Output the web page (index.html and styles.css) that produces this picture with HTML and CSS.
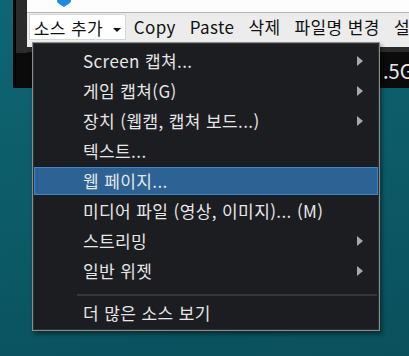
FILE: index.html
```html
<!DOCTYPE html>
<html lang="ko">
<head>
    <meta charset="UTF-8">
    <title>소스 추가</title>
    <link rel="stylesheet" href="styles.css">
</head>
<body>

    <!-- App window behind the menu -->
    <div class="window">
        <div class="win-top">
            <div class="side"></div>
            <div class="main">
                <div class="titlebar">
                    <svg class="logo" width="14" height="7" viewBox="0 0 14 7">
                        <path d="M0 0 H14 V1 C14 3 10 5 7 7 C4 5 0 3 0 1 Z" fill="#1e88e5"/>
                    </svg>
                </div>
                <div class="toolbar">
                    <div class="tool tool-add">소스 추가 <span class="caret"></span></div>
                    <div class="tool">Copy</div>
                    <div class="tool">Paste</div>
                    <div class="tool">삭제</div>
                    <div class="tool">파일명 변경</div>
                    <div class="tool">설정</div>
                </div>
                <div class="panel-head"></div>
            </div>
        </div>
        <div class="panel">
            <span class="size">.5GB</span>
        </div>
    </div>

    <!-- Dropdown menu -->
    <ul class="menu">
        <li class="item has-sub">Screen 캡쳐...</li>
        <li class="item has-sub">게임 캡쳐(G)</li>
        <li class="item has-sub">장치 (웹캠, 캡쳐 보드...)</li>
        <li class="item">텍스트...</li>
        <li class="item active">웹 페이지...</li>
        <li class="item">미디어 파일 (영상, 이미지)... (M)</li>
        <li class="item has-sub">스트리밍</li>
        <li class="item has-sub">일반 위젯</li>
        <li class="sep"></li>
        <li class="item">더 많은 소스 보기</li>
    </ul>

</body>
</html>
```

FILE: styles.css
```css
/* Global */
* {
    margin: 0;
    padding: 0;
    box-sizing: border-box;
}

body {
    width: 409px;
    height: 356px;
    overflow: hidden;
    position: relative;
    background: linear-gradient(170deg, #0f6673, #0c5966 60%, #0a4f5c);
    font-family: "Noto Sans CJK KR", "Noto Sans", sans-serif;
    font-size: 17px;
    letter-spacing: 0.4px;
}

/* Window behind */
.window {
    position: absolute;
    left: 13px;
    top: 0;
    width: 420px;
    height: 88px;
    background: #0b0b0b;
    border-left: 3px solid #050505;
}

.win-top {
    display: flex;
}

.side {
    width: 15px;
    height: 53px;
    background: #2b2b2b;
}

.main {
    flex: 1;
}

.titlebar {
    height: 13px;
    background: #fdfdfd;
    position: relative;
    border-bottom: 1px solid #b4b4b4;
}

.logo {
    position: absolute;
    left: 30px;
    top: 0;
}

.toolbar {
    height: 34px;
    background: #ececec;
    display: flex;
    align-items: flex-start;
    padding-left: 2px;
}

.tool {
    height: 26px;
    line-height: 26px;
    margin-top: 1px;
    padding: 0 7px;
    color: #111;
    white-space: nowrap;
}

.tool-add {
    background: #fff;
    border: 1px solid #d6d6d6;
    padding: 0 5px 0 4px;
    margin-right: 1px;
    width: 97px;
}

.caret {
    display: inline-block;
    width: 0;
    height: 0;
    margin-left: 5px;
    vertical-align: middle;
    border-left: 4px solid transparent;
    border-right: 4px solid transparent;
    border-top: 4px solid #111;
}

.panel-head {
    height: 5px;
    background: #2b2b2b;
}

.panel {
    height: 35px;
    position: relative;
}

.size {
    position: absolute;
    left: 367px;
    top: 3px;
    color: #e8e8e8;
    font-size: 20px;
    letter-spacing: 0;
}

/* Dropdown menu */
.menu {
    position: absolute;
    left: 32px;
    top: 42px;
    width: 348px;
    list-style: none;
    display: flex;
    flex-direction: column;
    background: #1c1d21;
    border: 1px solid #8c8c8c;
    box-shadow: inset 0 0 0 1px #2e2f33, 2px 3px 4px rgba(0, 0, 0, 0.45);
    padding: 3px 0 2px;
}

.item {
    position: relative;
    height: 28px;
    line-height: 25px;
    margin: 1px 1px;
    padding-left: 48px;
    color: #e6e6e6;
    white-space: nowrap;
    border: 1px solid transparent;
}

.item.active {
    background: #2c6294;
    border-color: #3a86cf;
}

.has-sub::after {
    content: "";
    position: absolute;
    left: 322px;
    top: 8px;
    width: 0;
    height: 0;
    border-top: 5px solid transparent;
    border-bottom: 5px solid transparent;
    border-left: 6px solid #a9a9a9;
}

.sep {
    height: 2px;
    margin: 8px 2px 2px 44px;
    background: #34373b;
}
```
